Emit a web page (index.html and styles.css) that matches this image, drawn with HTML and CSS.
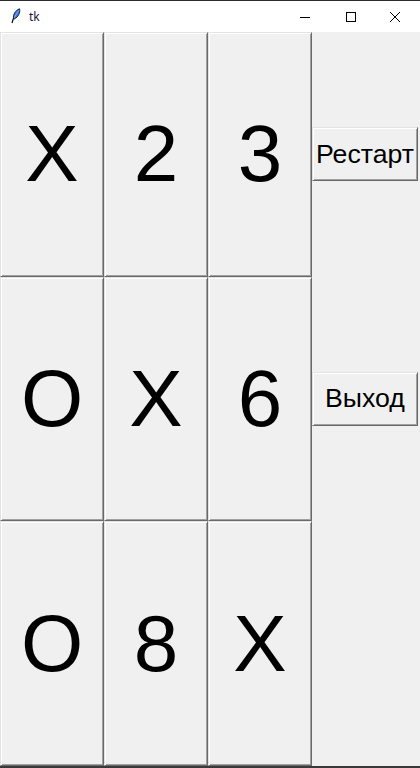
FILE: index.html
```html
<!DOCTYPE html>
<html lang="ru">
<head>
<meta charset="utf-8">
<title>tk</title>
<link rel="stylesheet" href="styles.css">
</head>
<body>
<div class="window">
  <div class="titlebar">
    <svg class="app-icon" width="10" height="16" viewBox="0 0 10 16">
      <path d="M1 15 L3.2 8" stroke="#000" stroke-width="1.2" fill="none"/>
      <path d="M2.6 10.5 C1.8 7 4 2.5 8.6 0.8 C9.4 4.5 7.4 9 3.4 11 Z" fill="#3a78d8" stroke="#0b1a3a" stroke-width="0.9"/>
      <path d="M3.2 9.6 L7.6 2.6" stroke="#9fc4f5" stroke-width="0.7"/>
    </svg>
    <span class="title">tk</span>
    <div class="controls">
      <div class="ctl">
        <svg width="12" height="12" viewBox="0 0 12 12"><path d="M1 6.5 H11" stroke="#000" stroke-width="1"/></svg>
      </div>
      <div class="ctl">
        <svg width="12" height="12" viewBox="0 0 12 12"><rect x="1.5" y="1.5" width="9" height="9" fill="none" stroke="#000" stroke-width="1"/></svg>
      </div>
      <div class="ctl">
        <svg width="12" height="12" viewBox="0 0 12 12"><path d="M1 1 L11 11 M11 1 L1 11" stroke="#000" stroke-width="1"/></svg>
      </div>
    </div>
  </div>
  <div class="board">
    <div class="cell">X</div>
    <div class="cell">2</div>
    <div class="cell">3</div>
    <div class="side"><div class="btn">Рестарт</div></div>
    <div class="cell">O</div>
    <div class="cell">X</div>
    <div class="cell">6</div>
    <div class="side"><div class="btn">Выход</div></div>
    <div class="cell">O</div>
    <div class="cell">8</div>
    <div class="cell">X</div>
    <div class="side"></div>
  </div>
  <div class="bottom"></div>
</div>
</body>
</html>
```
FILE: styles.css
```css
html, body {
  margin: 0;
  padding: 0;
  background: #f0f0f0;
}
.window {
  width: 420px;
  height: 768px;
  display: flex;
  flex-direction: column;
  overflow: hidden;
}
.titlebar {
  height: 31px;
  border-top: 1px solid #2b2b2b;
  background: #ffffff;
  display: flex;
  align-items: center;
  flex: none;
}
.app-icon {
  margin-left: 11px;
  margin-top: -1px;
}
.title {
  margin-left: 8px;
  font-family: "Noto Sans", "Liberation Sans", sans-serif;
  font-size: 12px;
  color: #1a1a3a;
  margin-top: -1px;
}
.controls {
  margin-left: auto;
  display: flex;
  height: 31px;
}
.ctl {
  width: 46px;
  height: 31px;
  display: flex;
  align-items: center;
  justify-content: center;
}
.ctl:nth-child(3) {
  width: 46px;
  padding-right: 4px;
  box-sizing: border-box;
}
.board {
  flex: 1;
  display: grid;
  grid-template-columns: 104px 104px 104px 108px;
  grid-template-rows: 1fr 1fr 1fr;
}
.cell {
  box-sizing: border-box;
  background: #f0f0f0;
  border-top: 1px solid #e3e3e3;
  border-left: 1px solid #e3e3e3;
  border-right: 1px solid #696969;
  border-bottom: 1px solid #696969;
  box-shadow: inset 1px 1px 0 #ffffff, inset -1px -1px 0 #a0a0a0;
  display: flex;
  align-items: center;
  justify-content: center;
  font-family: "Liberation Sans", Arial, sans-serif;
  font-size: 80px;
  color: #000;
  line-height: 1;
}
.side {
  display: flex;
  align-items: center;
  background: #f0f0f0;
}
.btn {
  box-sizing: border-box;
  width: 106px;
  height: 54px;
  background: #f0f0f0;
  border-top: 1px solid #e3e3e3;
  border-left: 1px solid #e3e3e3;
  border-right: 1px solid #696969;
  border-bottom: 1px solid #696969;
  box-shadow: inset 1px 1px 0 #ffffff, inset -1px -1px 0 #a0a0a0;
  display: flex;
  align-items: center;
  justify-content: center;
  font-family: "Liberation Sans", Arial, sans-serif;
  font-size: 26.7px;
  color: #000;
  white-space: nowrap;
}
.bottom {
  height: 2px;
  flex: none;
  background: #3a3a3a;
}
```
